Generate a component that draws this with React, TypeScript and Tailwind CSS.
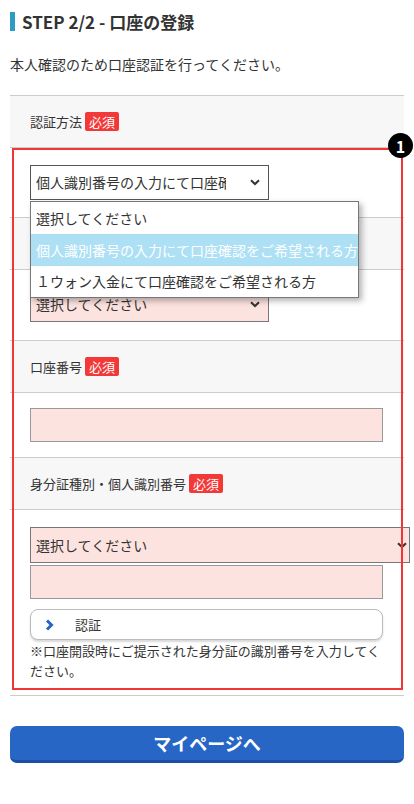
import React from "react";

const F = { fontFamily: '"Noto Sans CJK JP", "Noto Sans", sans-serif' };

function Req() {
  return (
    <span className="ml-[3px] inline-flex h-[19px] w-[34px] items-center justify-center rounded-[2px] bg-[#f33838] text-[13px] leading-none text-white">
      必須
    </span>
  );
}

function Header({ label }: { label?: string }) {
  return (
    <div className="flex h-[52px] items-center border-t border-[#cccccc] bg-[#f7f7f7] pl-[20px] text-[13px] text-[#333]">
      {label ? (
        <>
          <span>{label}</span>
          <Req />
        </>
      ) : null}
    </div>
  );
}

function Chevron() {
  return (
    <svg width="10" height="7" viewBox="0 0 10 7" className="shrink-0">
      <path d="M1 1.2 L5 5 L9 1.2" fill="none" stroke="#333" strokeWidth="2" />
    </svg>
  );
}

export default function App() {
  return (
    <div style={F} className="relative h-[804px] w-[414px] overflow-hidden bg-white text-[#333]">
      {/* title */}
      <div className="flex items-center gap-[7px] pl-[10px] pt-[12px]">
        <div className="h-[19px] w-[5px] bg-[#2d9bc4]" />
        <div className="text-[17px] font-bold leading-[19px] text-[#333]">STEP 2/2 - 口座の登録</div>
      </div>
      <div className="mt-[23px] pl-[10px] text-[14px] leading-[20px]">本人確認のため口座認証を行ってください。</div>

      {/* table */}
      <div className="relative mx-[10px] mt-[21px] border-b border-[#cccccc]">
        <Header label="認証方法" />
        <div className="border-t border-[#cccccc] px-[20px] pb-[17px] pt-[17px]">
          <div className="relative">
            <div className="flex h-[35px] w-[239px] items-center justify-between border border-[#555] bg-white pl-[5px] pr-[8px] text-[14px]">
              <span className="w-[190px] overflow-hidden whitespace-nowrap">個人識別番号の入力にて口座確</span>
              <Chevron />
            </div>
            <div className="absolute left-0 top-[36px] z-20 w-[329px] border border-[#777] bg-white text-[14px] shadow-[3px_3px_6px_rgba(0,0,0,0.3)]">
              <div className="flex h-[32px] items-center pl-[5px] text-[#333]">選択してください</div>
              <div className="flex h-[32px] items-center whitespace-nowrap bg-[#ade0f5] pl-[5px] text-white">個人識別番号の入力にて口座確認をご希望される方</div>
              <div className="flex h-[31px] items-center pl-[5px] text-[#333]">１ウォン入金にて口座確認をご希望される方</div>
            </div>
          </div>
        </div>
        <Header />
        <div className="border-t border-[#cccccc] px-[20px] pb-[18px] pt-[17px]">
          <div className="flex h-[35px] w-[239px] items-center justify-between border border-[#777] bg-[#fde3df] pl-[5px] pr-[8px] text-[14px]">
            <span>選択してください</span>
            <Chevron />
          </div>
        </div>
        <Header label="口座番号" />
        <div className="border-t border-[#cccccc] px-[20px] pb-[15px] pt-[15px]">
          <div className="h-[34px] w-[353px] border border-[#999] bg-[#fde3df]" />
        </div>
        <Header label="身分証種別・個人識別番号" />
        <div className="border-t border-[#cccccc] px-[20px] pb-[14px] pt-[17px]">
          <div className="flex h-[36px] w-[380px] items-center justify-between border border-[#777] bg-[#fde3df] pl-[5px] pr-[2px] text-[14px]">
            <span>選択してください</span>
            <Chevron />
          </div>
          <div className="mt-[2px] h-[34px] w-[353px] border border-[#999] bg-[#fde3df]" />
          <div className="mt-[10px] flex h-[31px] w-[353px] items-center rounded-[8px] border border-[#bbb] bg-white pl-[14px] text-[13px] shadow-[0_2px_2px_rgba(0,0,0,0.15)]">
            <svg width="9" height="12" viewBox="0 0 9 12">
              <path d="M2 1.5 L6.5 6 L2 10.5" fill="none" stroke="#2a63c2" strokeWidth="3" />
            </svg>
            <span className="ml-[21px]">認証</span>
          </div>
          <div className="mt-[1px] text-[13px] leading-[20px]">
            ※口座開設時にご提示された身分証の識別番号を入力してください。
          </div>
        </div>

        {/* red highlight box */}
        <div className="pointer-events-none absolute left-[2px] top-[53px] z-10 h-[542px] w-[391px] border-2 border-[#f23535]">
          <div className="absolute right-[-12px] top-[-17px] flex h-[25px] w-[25px] items-center justify-center rounded-full bg-black text-[16px] font-bold leading-none text-white">
            1
          </div>
        </div>
      </div>

      {/* main button */}
      <div className="px-[10px] pt-[30px]">
        <div className="flex h-[37px] items-center justify-center rounded-[7px] border-b-[3px] border-[#1b4ea6] bg-[#2866c6] text-[18px] font-bold text-white">
          マイページへ
        </div>
      </div>
    </div>
  );
}
